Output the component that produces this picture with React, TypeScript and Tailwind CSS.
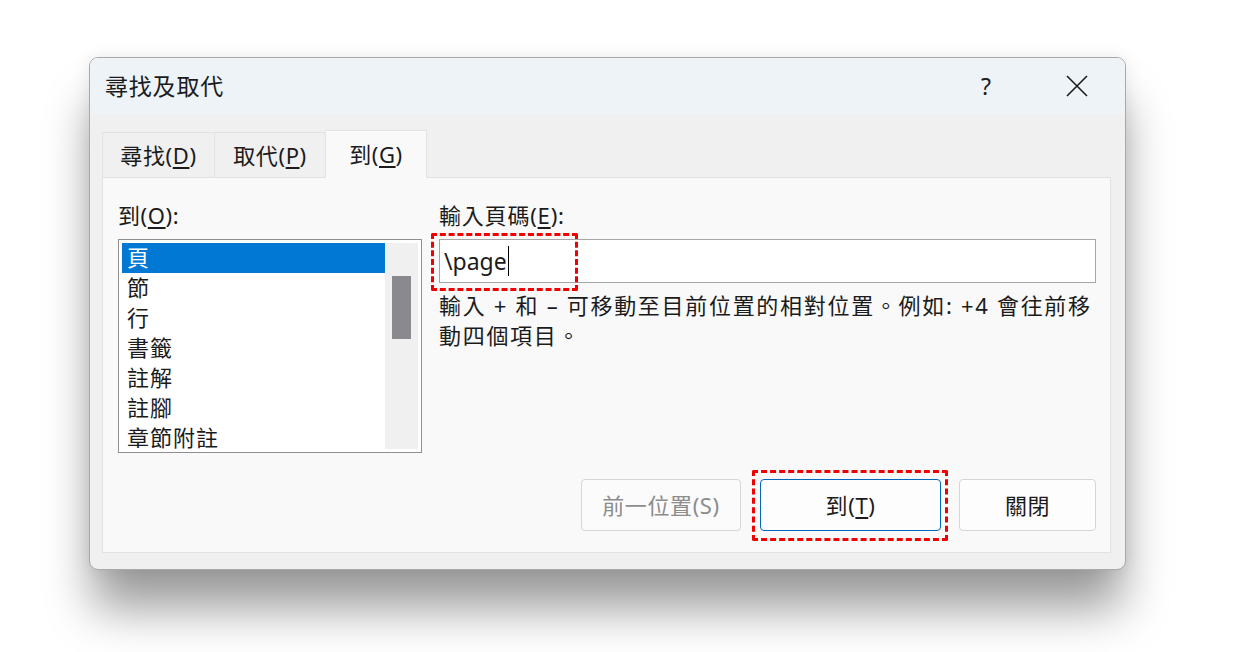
import React from "react";

const U = ({ children }: { children: React.ReactNode }) => (
  <span className="underline underline-offset-[3px] decoration-[1.5px]">{children}</span>
);

export default function App() {
  const items = ["頁", "節", "行", "書籤", "註解", "註腳", "章節附註"];
  return (
    <div className="w-[1238px] h-[652px] bg-white overflow-hidden pl-[89px] pt-[57px] font-['Noto_Sans','Noto_Sans_CJK_TC',sans-serif] text-[#1b1b1b]">
      <div className="w-[1037px] h-[513px] rounded-[9px] border border-[#a9a9a9] bg-[#f0f0f0] shadow-[0_42px_48px_-4px_rgba(0,0,0,0.4),0_0_18px_rgba(0,0,0,0.08)] flex flex-col overflow-hidden">
        {/* title bar */}
        <div className="h-[56px] bg-[#eef3f8] flex items-center pl-[15px] shrink-0">
          <span className="text-[23px] leading-[28px] tracking-[0.8px]">尋找及取代</span>
          <span className="ml-auto text-[23px] leading-[28px] w-[12px] text-center">?</span>
          <div className="ml-[73px] mr-[36px] w-[24px] h-[24px] flex items-center justify-center">
            <svg width="22" height="22" viewBox="0 0 22 22">
              <path d="M1 1 L21 21 M21 1 L1 21" stroke="#1b1b1b" strokeWidth="1.6" fill="none" />
            </svg>
          </div>
        </div>
        {/* body */}
        <div className="flex-1 flex flex-col pl-[12px] pr-[14px] pt-[16px] pb-[16px]">
          {/* tabs */}
          <div className="flex items-end h-[47px] shrink-0">
            <div className="h-[45px] w-[113px] border border-b-0 border-[#e2e2e2] bg-[#f0f0f0] flex items-center justify-center text-[22px] leading-[28px] tracking-[0.6px]">
              <span>尋找(<U>D</U>)</span>
            </div>
            <div className="h-[45px] w-[111px] border border-b-0 border-l-0 border-[#e2e2e2] bg-[#f0f0f0] flex items-center justify-center text-[22px] leading-[28px] tracking-[0.6px]">
              <span>取代(<U>P</U>)</span>
            </div>
            <div className="h-[48px] w-[101px] border border-b-0 border-l-0 border-[#e2e2e2] bg-[#f9f9f9] flex items-center justify-center text-[22px] leading-[28px] tracking-[0.6px] -mb-px relative z-10 pb-[2px]">
              <span>到(<U>G</U>)</span>
            </div>
          </div>
          {/* panel */}
          <div className="flex-1 border border-[#e2e2e2] bg-[#f9f9f9] flex flex-col pl-[15px] pr-[14px] pt-[23px] pb-[21px]">
            <div className="flex gap-[17px]">
              {/* left column */}
              <div className="w-[304px] flex flex-col">
                <div className="text-[22px] leading-[28px] h-[28px] mb-[10px] tracking-[0.6px]">到(<U>O</U>):</div>
                <div className="h-[214px] border border-[#8f8f8f] bg-white flex p-[3px] pr-[3px]">
                  <div className="flex-1 flex flex-col">
                    {items.map((it, i) => (
                      <div
                        key={it}
                        className={
                          "h-[30px] pl-[5px] flex items-center text-[22px] leading-[30px] tracking-[1px] pb-[3px] " +
                          (i === 0 ? "bg-[#0078d4] text-white" : "")
                        }
                      >
                        {it}
                      </div>
                    ))}
                  </div>
                  <div className="w-[33px] bg-[#f0f0f0] flex justify-center pt-[33px]">
                    <div className="w-[19px] h-[63px] bg-[#8a8a8e]" />
                  </div>
                </div>
              </div>
              {/* right column */}
              <div className="w-[657px] flex flex-col">
                <div className="text-[22px] leading-[28px] h-[28px] mb-[10px] tracking-[0.8px]">輸入頁碼(<U>E</U>):</div>
                <div className="relative h-[44px] border border-[#a6a6a6] bg-white flex items-center pl-[4px]">
                  <span className="text-[23px] leading-[30px]">\page</span>
                  <span className="w-px h-[30px] bg-black ml-[1px]" />
                  <div className="absolute left-[-9px] top-[-7px] w-[147px] h-[58px] border-[3px] border-dashed border-[#f00000] rounded-[2px]" />
                </div>
                <div className="mt-[7px] text-[22px] leading-[30px] tracking-[1.7px] whitespace-nowrap">
                  <div>輸入 + 和 – 可移動至目前位置的相對位置。例如: +4 會往前移</div>
                  <div>動四個項目。</div>
                </div>
              </div>
            </div>
            {/* buttons */}
            <div className="mt-auto flex justify-end gap-[18px] pr-[0px]">
              <div className="w-[160px] h-[52px] rounded-[4px] border border-[#d6d6d6] bg-[#fbfbfb] flex items-center justify-center text-[22px] tracking-[0.6px] text-[#8c8c8c]">
                前一位置(S)
              </div>
              <div className="relative ml-[1px] w-[181px] h-[52px] rounded-[4px] border border-[#0067c0] bg-[#fdfdfd] flex items-center justify-center text-[22px] tracking-[0.6px]">
                <span>到(<U>T</U>)</span>
                <div className="absolute left-[-9px] top-[-10px] w-[196px] h-[71px] border-[3px] border-dashed border-[#f00000] rounded-[2px]" />
              </div>
              <div className="w-[137px] h-[52px] rounded-[4px] border border-[#d6d6d6] bg-[#fdfdfd] flex items-center justify-center text-[22px] tracking-[0.6px]">
                關閉
              </div>
            </div>
          </div>
        </div>
      </div>
    </div>
  );
}
